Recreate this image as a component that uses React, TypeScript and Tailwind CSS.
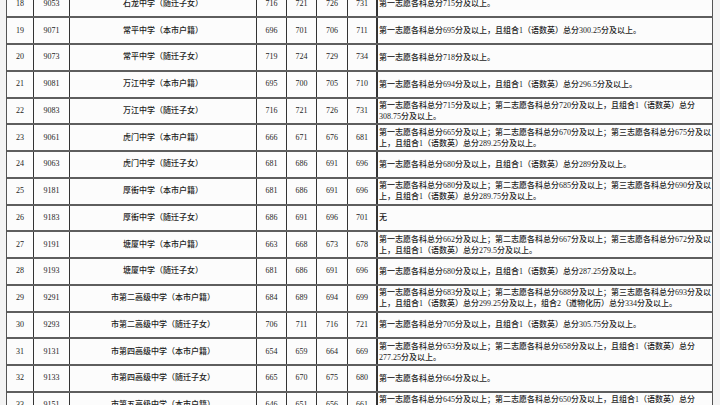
import React from "react";

type Row = {
  no: number;
  code: string;
  name: string;
  scores: number[];
  note: string[];
};

const rows: Row[] = [
  { no: 18, code: "9053", name: "石龙中学（随迁子女）", scores: [716, 721, 726, 731], note: ["第一志愿各科总分715分及以上。"] },
  { no: 19, code: "9071", name: "常平中学（本市户籍）", scores: [696, 701, 706, 711], note: ["第一志愿各科总分695分及以上，且组合1（语数英）总分300.25分及以上。"] },
  { no: 20, code: "9073", name: "常平中学（随迁子女）", scores: [719, 724, 729, 734], note: ["第一志愿各科总分718分及以上。"] },
  { no: 21, code: "9081", name: "万江中学（本市户籍）", scores: [695, 700, 705, 710], note: ["第一志愿各科总分694分及以上，且组合1（语数英）总分296.5分及以上。"] },
  { no: 22, code: "9083", name: "万江中学（随迁子女）", scores: [716, 721, 726, 731], note: ["第一志愿各科总分715分及以上；第二志愿各科总分720分及以上，且组合1（语数英）总分", "308.75分及以上。"] },
  { no: 23, code: "9061", name: "虎门中学（本市户籍）", scores: [666, 671, 676, 681], note: ["第一志愿各科总分665分及以上；第二志愿各科总分670分及以上；第三志愿各科总分675分及以", "上，且组合1（语数英）总分289.25分及以上。"] },
  { no: 24, code: "9063", name: "虎门中学（随迁子女）", scores: [681, 686, 691, 696], note: ["第一志愿各科总分680分及以上，且组合1（语数英）总分289分及以上。"] },
  { no: 25, code: "9181", name: "厚街中学（本市户籍）", scores: [681, 686, 691, 696], note: ["第一志愿各科总分680分及以上；第二志愿各科总分685分及以上；第三志愿各科总分690分及以", "上，且组合1（语数英）总分289.75分及以上。"] },
  { no: 26, code: "9183", name: "厚街中学（随迁子女）", scores: [686, 691, 696, 701], note: ["无"] },
  { no: 27, code: "9191", name: "塘厦中学（本市户籍）", scores: [663, 668, 673, 678], note: ["第一志愿各科总分662分及以上；第二志愿各科总分667分及以上；第三志愿各科总分672分及以", "上，且组合1（语数英）总分279.5分及以上。"] },
  { no: 28, code: "9193", name: "塘厦中学（随迁子女）", scores: [681, 686, 691, 696], note: ["第一志愿各科总分680分及以上，且组合1（语数英）总分287.25分及以上。"] },
  { no: 29, code: "9291", name: "市第二高级中学（本市户籍）", scores: [684, 689, 694, 699], note: ["第一志愿各科总分683分及以上；第二志愿各科总分688分及以上；第三志愿各科总分693分及以", "上，且组合1（语数英）总分299.25分及以上，组合2（道物化历）总分334分及以上。"] },
  { no: 30, code: "9293", name: "市第二高级中学（随迁子女）", scores: [706, 711, 716, 721], note: ["第一志愿各科总分705分及以上，且组合1（语数英）总分305.75分及以上。"] },
  { no: 31, code: "9131", name: "市第四高级中学（本市户籍）", scores: [654, 659, 664, 669], note: ["第一志愿各科总分653分及以上；第二志愿各科总分658分及以上，且组合1（语数英）总分", "277.25分及以上。"] },
  { no: 32, code: "9133", name: "市第四高级中学（随迁子女）", scores: [665, 670, 675, 680], note: ["第一志愿各科总分664分及以上。"] },
  { no: 33, code: "9151", name: "市第五高级中学（本市户籍）", scores: [646, 651, 656, 661], note: ["第一志愿各科总分645分及以上；第二志愿各科总分650分及以上，且组合1（语数英）总分", "270.5分及以上。"] },
];

const scoreWidths = ["w-[30px]", "w-[30px]", "w-[31px]", "w-[30px]"];

const App: React.FC = () => {
  return (
    <div
      className="h-[405px] w-[720px] overflow-hidden bg-[#f4f4f4] font-medium text-[#1c1c1c]"
      style={{ fontFamily: '"Liberation Serif", "Noto Sans CJK SC", serif' }}
    >
      {/* table, first row cut off at the top */}
      <div className="ml-[6px] mt-[-8.5px] w-[707px] border-l border-[#555] bg-[#fcfcfc]">
        {rows.map((r) => (
          <div key={r.no} className="flex h-[26.75px] border-b-2 border-[#5e5e5e] text-[8px]">
            <div className="flex w-[27px] items-center justify-center border-r border-[#333]">{r.no}</div>
            <div className="flex w-[36px] items-center justify-center border-r border-[#333]">{r.code}</div>
            <div className="flex w-[187px] items-center justify-center border-r border-[#333]">{r.name}</div>
            {r.scores.map((s, i) => (
              <div
                key={i}
                className={`flex ${scoreWidths[i]} items-center justify-center border-[#333] ${
                  i === 3 ? "border-r-2 border-[#222]" : "border-r"
                }`}
              >
                {s}
              </div>
            ))}
            <div className="flex w-[335px] flex-col justify-center overflow-hidden border-r border-[#555] pl-[1px] leading-[11px]">
              {r.note.map((line, i) => (
                <div key={i} className="whitespace-nowrap">
                  {line}
                </div>
              ))}
            </div>
          </div>
        ))}
      </div>
    </div>
  );
};

export default App;
